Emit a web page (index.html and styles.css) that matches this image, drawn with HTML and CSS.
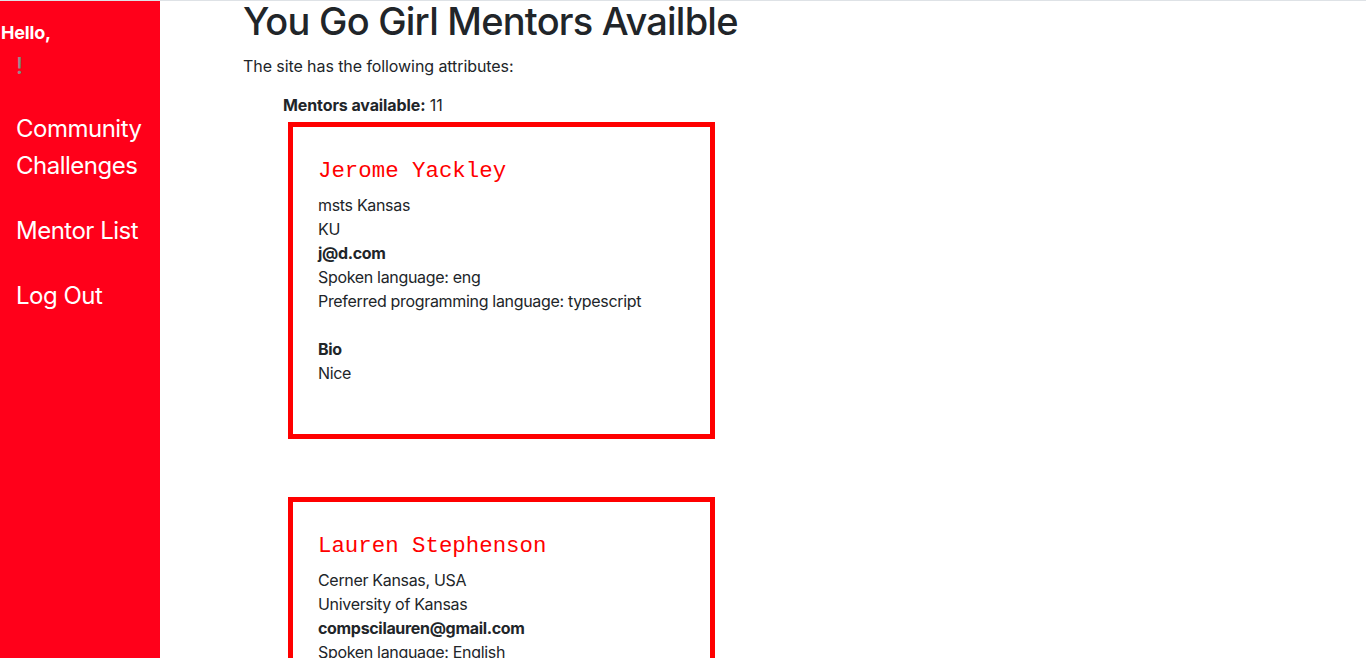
FILE: index.html
```html
<!DOCTYPE html>
<html lang="en">
<head>
<meta charset="utf-8">
<title>You Go Girl Mentors</title>
<link rel="stylesheet" href="styles.css">
</head>
<body>
<div class="layout">
  <aside class="sidebar">
    <div class="hello">Hello,</div>
    <div class="user">!</div>
    <ul class="nav">
      <li><a href="#">Community Challenges</a></li>
      <li><a href="#">Mentor List</a></li>
      <li><a href="#">Log Out</a></li>
    </ul>
  </aside>
  <main class="main">
    <h1 class="title">You Go Girl Mentors Availble</h1>
    <p class="intro">The site has the following attributes:</p>
    <ul class="mentors">
      <li class="count"><strong>Mentors available:</strong> 11</li>
      <li class="card">
        <h3 class="name">Jerome Yackley</h3>
        <p class="info">msts Kansas<br>KU<br><strong>j@d.com</strong><br>Spoken language: eng<br>Preferred programming language: typescript<br><br><strong>Bio</strong><br>Nice</p>
      </li>
      <li class="card">
        <h3 class="name">Lauren Stephenson</h3>
        <p class="info">Cerner Kansas, USA<br>University of Kansas<br><strong>compscilauren@gmail.com</strong><br>Spoken language: English<br>Preferred programming language: Java<br><br><strong>Bio</strong><br>Software engineer who loves helping new developers.</p>
      </li>
    </ul>
  </main>
</div>
</body>
</html>
```
FILE: styles.css
```css
* { box-sizing: border-box; }
html, body { margin: 0; padding: 0; }
body {
  font-family: "Inter", "Liberation Sans", sans-serif;
  font-size: 16px;
  line-height: 24px;
  letter-spacing: -0.32px;
  color: #212529;
  background: #fff;
  border-top: 1px solid #dee2e6;
}
.layout {
  display: flex;
  min-height: calc(100vh - 1px);
}
.sidebar {
  width: 160px;
  flex: 0 0 160px;
  background: #ff001a;
  color: #fff;
  padding-top: 19px;
}
.hello {
  font-size: 18px;
  font-weight: 700;
  line-height: 26px;
  padding-left: 1px;
  letter-spacing: -0.2px;
}
.user {
  color: #8c8c8c;
  font-size: 23px;
  font-weight: 500;
  line-height: 28px;
  padding-left: 16px;
  margin-top: 6px;
}
.nav {
  list-style: none;
  margin: 30px 0 0;
  padding: 0;
}
.nav li { margin-bottom: 28px; }
.nav a {
  display: block;
  color: #fff;
  text-decoration: none;
  font-size: 24px;
  line-height: 37px;
  padding-left: 16px;
  letter-spacing: -0.5px;
}
.main {
  flex: 1;
  padding-left: 83px;
}
.title {
  font-size: 38px;
  font-weight: 500;
  line-height: 40px;
  margin: 0 0 13px;
  letter-spacing: -0.77px;
}
.intro {
  margin: 0 0 15px;
  letter-spacing: -0.08px;
}
.mentors {
  list-style: none;
  margin: 0;
  padding-left: 40px;
}
.count {
  margin-bottom: 5px;
  letter-spacing: -0.1px;
}
.card {
  width: 427px;
  margin-left: 5px;
  margin-bottom: 58px;
  border: 5px solid #ff0000;
  padding: 31px 25px 33px;
}
.name {
  font-family: "Liberation Mono", "Courier New", monospace;
  font-size: 22.4px;
  font-weight: 400;
  line-height: 26px;
  letter-spacing: 0;
  color: #ff0000;
  margin: 0 0 9px;
}
.info { margin: 0 0 16px; }
```
